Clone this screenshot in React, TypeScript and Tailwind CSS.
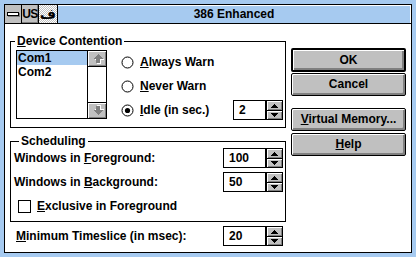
import React from "react";

const FONT = "font-['Liberation_Sans',Arial,sans-serif]";

function SpinArrows() {
  return (
    <div className="flex w-[17px] flex-col border border-black">
      <div className="flex h-[9px] items-center justify-center bg-[#c0c0c0] shadow-[inset_1px_1px_0_#fff,inset_-1px_-1px_0_#808080]">
        <svg width="7" height="4" viewBox="0 0 7 4" shapeRendering="crispEdges">
          <polygon points="3.5,0 7,4 0,4" fill="#000" />
        </svg>
      </div>
      <div className="flex h-[9px] items-center justify-center border-t border-black bg-[#c0c0c0] shadow-[inset_1px_1px_0_#fff,inset_-1px_-1px_0_#808080]">
        <svg width="7" height="4" viewBox="0 0 7 4" shapeRendering="crispEdges">
          <polygon points="0,0 7,0 3.5,4" fill="#000" />
        </svg>
      </div>
    </div>
  );
}

function Spin({ value, box }: { value: string; box: string }) {
  return (
    <div className="ml-auto flex h-[20px]">
      <div className={`${box} border border-black bg-white pl-[5px] leading-[18px]`}>{value}</div>
      <SpinArrows />
    </div>
  );
}

function Radio({ checked }: { checked?: boolean }) {
  return (
    <svg width="13" height="13" viewBox="0 0 13 13">
      <circle cx="6.5" cy="6.5" r="5.5" fill="#fff" stroke="#000" strokeWidth="1" />
      {checked && <circle cx="6.5" cy="6.5" r="2.6" fill="#000" />}
    </svg>
  );
}

function ScrollArrow({ up }: { up?: boolean }) {
  const pts = "9,2 4,7 7,7 7,11 11,11 11,7 14,7";
  return (
    <div
      className={`flex h-[16px] items-center justify-center bg-[#c0c0c0] shadow-[inset_1px_1px_0_#fff,inset_-1px_-1px_0_#808080] ${
        up ? "border-b border-black" : "border-t border-black"
      }`}
    >
      <svg width="17" height="13" viewBox="0 0 17 13" shapeRendering="crispEdges" style={{ transform: up ? undefined : "scaleY(-1)" }}>
        <g transform="translate(1,1)">
          <polygon points={pts} fill="#fff" />
        </g>
        <polygon points={pts} fill="#808080" />
      </svg>
    </div>
  );
}

function Btn({ children, def, className = "" }: { children: React.ReactNode; def?: boolean; className?: string }) {
  return (
    <div
      className={`flex items-center justify-center rounded-[2px] border-black bg-[#c0c0c0] shadow-[inset_1px_1px_0_#fff,inset_-2px_-2px_0_#808080] ${
        def ? "h-[24px] border-2" : "h-[23px] border"
      } ${className}`}
    >
      {children}
    </div>
  );
}

export default function App() {
  return (
    <div className={`${FONT} flex h-[257px] w-[416px] flex-col bg-[#a6caf0] p-[4px] text-[12px] font-bold leading-[15px] text-black`}>
      <div className="flex flex-1 flex-col border border-black">
        {/* Title bar */}
        <div className="flex h-[19px] border-b border-black bg-[#a6caf0]">
          <div className="flex w-[17px] items-center justify-center border-r border-black bg-[#c0c0c0]">
            <div className="h-[4px] w-[12px] border border-black bg-white shadow-[1px_1px_0_#808080]" />
          </div>
          <div className="flex w-[17px] items-center justify-center border-r border-black bg-[#c0c0c0] text-[12px] tracking-[-0.5px] shadow-[inset_-1px_-1px_0_#808080]">
            US
          </div>
          <div className="flex w-[19px] items-center justify-center overflow-hidden border-r border-black bg-[repeating-conic-gradient(#c0c0c0_0%_25%,#ffffff_0%_50%)] bg-[length:2px_2px] font-['DejaVu_Sans',sans-serif] text-[14px] leading-[18px]">
            ف
          </div>
          <div className="flex flex-1 items-center justify-center border-t border-r border-white">386 Enhanced</div>
        </div>

        {/* Body */}
        <div className="flex flex-1 gap-[5px] bg-white px-[5px]">
          {/* Left column */}
          <div className="flex w-[276px] flex-col pt-[17px]">
            {/* Device Contention */}
            <div className="border border-black pb-[7px] pl-[5px] pr-[2px]">
              <div className="-mt-[8px] -ml-[1px] w-fit bg-white px-[2px] leading-[15px]">
                <u>D</u>evice Contention
              </div>
              <div className="flex items-start">
                <div className="mt-[1px] flex h-[69px] w-[91px] border border-black">
                  <div className="flex-1">
                    <div className="h-[14px] bg-[#a6caf0] pl-[1px] leading-[14px]">Com1</div>
                    <div className="h-[14px] pl-[1px] leading-[14px]">Com2</div>
                  </div>
                  <div className="flex w-[19px] flex-col justify-between border-l border-black">
                    <ScrollArrow up />
                    <ScrollArrow />
                  </div>
                </div>
                <div className="ml-[14px] mt-[3px] flex flex-1 flex-col gap-[4px]">
                  <div className="flex h-[20px] items-center gap-[6px]">
                    <Radio />
                    <span>
                      <u>A</u>lways Warn
                    </span>
                  </div>
                  <div className="flex h-[20px] items-center gap-[6px]">
                    <Radio />
                    <span>
                      <u>N</u>ever Warn
                    </span>
                  </div>
                  <div className="flex h-[20px] items-center gap-[6px]">
                    <Radio checked />
                    <span>
                      <u>I</u>dle (in sec.)
                    </span>
                    <Spin value="2" box="w-[33px]" />
                  </div>
                </div>
              </div>
            </div>

            {/* Scheduling */}
            <div className="mt-[13px] border border-black pb-[5px] pr-[2px]">
              <div className="-mt-[8px] ml-[8px] w-fit bg-white px-[2px] leading-[15px]">Scheduling</div>
              <div className="-mt-[1px] flex h-[20px] items-center pl-[3px]">
                <span>
                  Windows in <u>F</u>oreground:
                </span>
                <Spin value="100" box="w-[43px]" />
              </div>
              <div className="mt-[4px] flex h-[20px] items-center pl-[3px]">
                <span>
                  Windows in <u>B</u>ackground:
                </span>
                <Spin value="50" box="w-[43px]" />
              </div>
              <div className="mt-[4px] flex h-[20px] items-center gap-[6px] pl-[7px]">
                <div className="h-[13px] w-[13px] border border-black bg-white" />
                <span>
                  <u>E</u>xclusive in Foreground
                </span>
              </div>
            </div>

            {/* Minimum timeslice */}
            <div className="mt-[4px] flex h-[20px] items-center pl-[6px] pr-[3px]">
              <span>
                <u>M</u>inimum Timeslice (in msec):
              </span>
              <Spin value="20" box="w-[43px]" />
            </div>
          </div>

          {/* Right column */}
          <div className="flex w-[115px] flex-col pt-[24px]">
            <Btn def>OK</Btn>
            <Btn className="mt-[1px]">Cancel</Btn>
            <Btn className="mt-[12px]">
              <span>
                <u>V</u>irtual Memory...
              </span>
            </Btn>
            <Btn className="mt-[2px]">
              <span>
                <u>H</u>elp
              </span>
            </Btn>
          </div>
        </div>
      </div>
    </div>
  );
}
